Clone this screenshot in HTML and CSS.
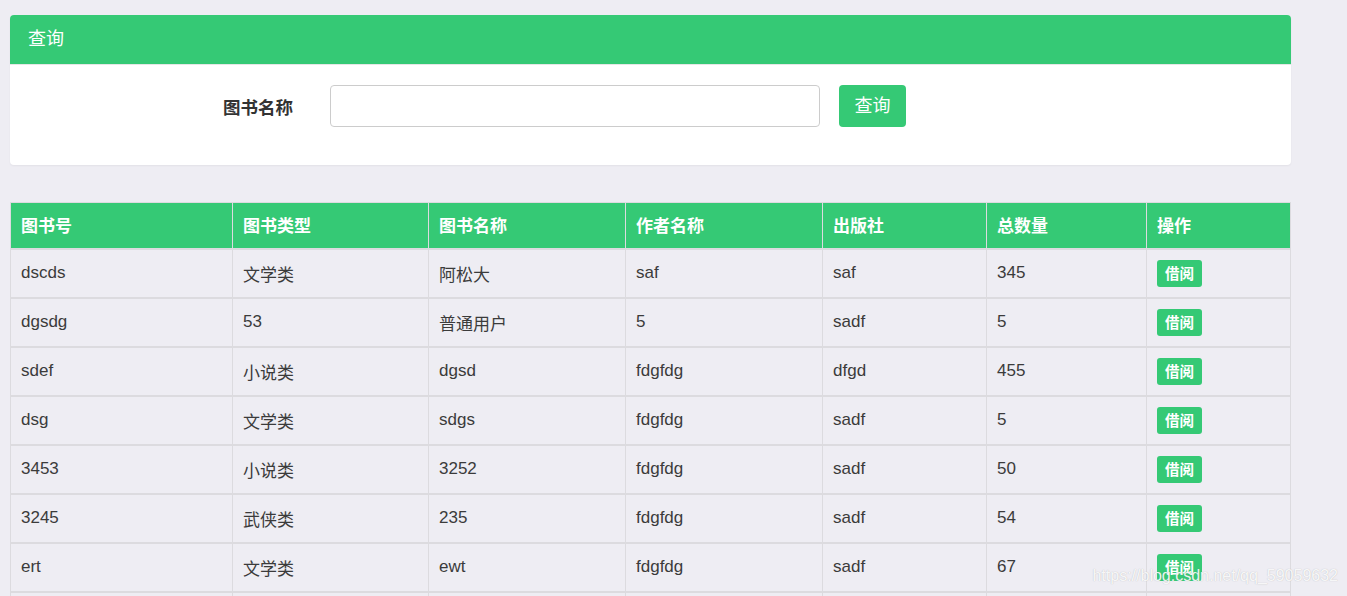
FILE: index.html
```html
<!DOCTYPE html>
<html lang="zh">
<head>
<meta charset="utf-8">
<title>图书查询</title>
<link rel="stylesheet" href="styles.css">
</head>
<body>
<div class="page">
  <section class="card">
    <div class="card-head">查询</div>
    <div class="card-body">
      <label class="label">图书名称</label>
      <input class="input" type="text">
      <button class="btn">查询</button>
    </div>
  </section>
  <table class="grid">
    <colgroup>
      <col style="width:222px"><col style="width:196px"><col style="width:197px"><col style="width:197px"><col style="width:164px"><col style="width:160px"><col style="width:144px">
    </colgroup>
    <thead>
      <tr><th>图书号</th><th>图书类型</th><th>图书名称</th><th>作者名称</th><th>出版社</th><th>总数量</th><th>操作</th></tr>
    </thead>
    <tbody>
      <tr><td>dscds</td><td>文学类</td><td>阿松大</td><td>saf</td><td>saf</td><td>345</td><td><span class="tag">借阅</span></td></tr>
      <tr><td>dgsdg</td><td>53</td><td>普通用户</td><td>5</td><td>sadf</td><td>5</td><td><span class="tag">借阅</span></td></tr>
      <tr><td>sdef</td><td>小说类</td><td>dgsd</td><td>fdgfdg</td><td>dfgd</td><td>455</td><td><span class="tag">借阅</span></td></tr>
      <tr><td>dsg</td><td>文学类</td><td>sdgs</td><td>fdgfdg</td><td>sadf</td><td>5</td><td><span class="tag">借阅</span></td></tr>
      <tr><td>3453</td><td>小说类</td><td>3252</td><td>fdgfdg</td><td>sadf</td><td>50</td><td><span class="tag">借阅</span></td></tr>
      <tr><td>3245</td><td>武侠类</td><td>235</td><td>fdgfdg</td><td>sadf</td><td>54</td><td><span class="tag">借阅</span></td></tr>
      <tr><td>ert</td><td>文学类</td><td>ewt</td><td>fdgfdg</td><td>sadf</td><td>67</td><td><span class="tag">借阅</span></td></tr>
      <tr><td>werw</td><td>文学类</td><td>wer</td><td>fdgfdg</td><td>sadf</td><td>5</td><td><span class="tag">借阅</span></td></tr>
    </tbody>
  </table>
</div>
<div class="watermark">https://blog.csdn.net/qq_59059632</div>
</body>
</html>
```
FILE: styles.css
```css
html, body {
  margin: 0;
  padding: 0;
  background: #eeedf3;
  height: 100%;
  overflow: hidden;
}
body {
  font-family: "Liberation Sans", Arial, "Noto Sans CJK SC", sans-serif;
  color: #333;
}
.page {
  padding: 15px 0 0 10px;
  width: 1281px;
}
.card {
  background: #fff;
  border-radius: 4px;
  overflow: hidden;
  box-shadow: 0 1px 2px rgba(0,0,0,0.05);
  height: 150px;
}
.card-head {
  background: #35c975;
  color: #fff;
  height: 50px;
  line-height: 48px;
  padding-left: 18px;
  font-size: 18px;
  border-bottom: 1px solid #e6e6e6;
  box-sizing: border-box;
}
.card-body {
  display: flex;
  align-items: center;
  padding: 20px 0 0 0;
}
.label {
  width: 283px;
  text-align: right;
  font-weight: bold;
  font-size: 17.5px;
  color: #333;
  margin-right: 37px;
  font-family: "Noto Sans CJK SC", sans-serif;
}
.input {
  width: 490px;
  height: 42px;
  box-sizing: border-box;
  border: 1px solid #ccc;
  border-radius: 4px;
  margin: 0 19px 0 0;
  padding: 0 10px;
  outline: none;
}
.btn {
  width: 67px;
  height: 42px;
  background: #35c975;
  border: none;
  border-radius: 4px;
  color: #fff;
  font-size: 18px;
  font-family: "Noto Sans CJK SC", sans-serif;
  padding: 0 0 4px 0;
  line-height: 38px;
}
.grid {
  margin-top: 37px;
  border-collapse: collapse;
  table-layout: fixed;
  width: 1281px;
}
.grid th, .grid td {
  border: 1px solid #dcdbdf;
  text-align: left;
  padding: 0 0 0 10px;
  font-size: 17px;
}
.grid th {
  background: #35c975;
  color: #fff;
  font-weight: bold;
  height: 46px;
  padding-bottom: 2px;
  box-sizing: border-box;
  font-family: "Noto Sans CJK SC", sans-serif;
  border-bottom: 2px solid #dcdbdf;
}
.grid td {
  height: 47px;
  border-bottom: 2px solid #dcdbdf;
  color: #3b3b3b;
}
.tag {
  display: inline-block;
  background: #35c975;
  color: #fff;
  font-size: 14.5px;
  font-weight: bold;
  border-radius: 3px;
  height: 27px;
  line-height: 26px;
  padding: 0 8px;
  font-family: "Noto Sans CJK SC", sans-serif;
  vertical-align: middle;
}
.watermark {
  position: absolute;
  right: 9px;
  top: 567px;
  font-size: 16px;
  color: rgba(255,255,255,0.9);
  text-shadow: 0 0 1px rgba(110,110,110,0.45);
  font-family: "Liberation Sans", Arial, sans-serif;
}
```
